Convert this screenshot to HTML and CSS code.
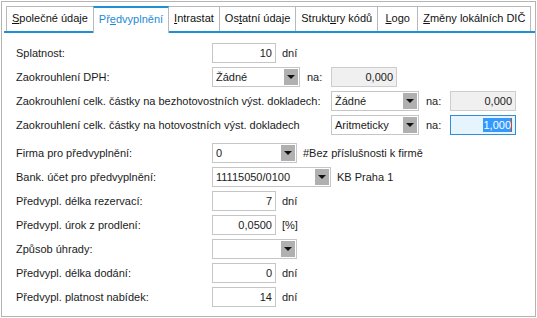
FILE: index.html
```html
<!DOCTYPE html>
<html lang="cs">
<head>
    <meta charset="UTF-8">
    <title>Předvyplnění</title>
    <link rel="stylesheet" href="styles.css">
</head>
<body>
    <div class="window">
        <div class="tabs">
            <div class="tab"><u>S</u>polečné údaje</div>
            <div class="tab active">Př<u>e</u>dvyplnění</div>
            <div class="tab"><u>I</u>ntrastat</div>
            <div class="tab">Os<u>t</u>atní údaje</div>
            <div class="tab">Strukt<u>u</u>ry kódů</div>
            <div class="tab"><u>L</u>ogo</div>
            <div class="tab"><u>Z</u>měny lokálních DIČ</div>
        </div>

        <div class="panel">
            <div class="group">
                <div class="row">
                    <span class="label">Splatnost:</span>
                    <span class="box num">10</span>
                    <span class="unit">dní</span>
                </div>
                <div class="row">
                    <span class="label">Zaokrouhlení DPH:</span>
                    <span class="combo w88"><span class="value">Žádné</span><span class="arrow"></span></span>
                    <span class="na">na:</span>
                    <span class="box small disabled">0,000</span>
                </div>
                <div class="row">
                    <span class="label wide">Zaokrouhlení celk. částky na bezhotovostních výst. dokladech:</span>
                    <span class="combo w88"><span class="value">Žádné</span><span class="arrow"></span></span>
                    <span class="na">na:</span>
                    <span class="box small disabled">0,000</span>
                </div>
                <div class="row">
                    <span class="label wide">Zaokrouhlení celk. částky na hotovostních výst. dokladech</span>
                    <span class="combo w88"><span class="value">Aritmeticky</span><span class="arrow"></span></span>
                    <span class="na">na:</span>
                    <span class="box small focused"><span class="selected">1,000</span><span class="caret"></span></span>
                </div>
            </div>

            <div class="group">
                <div class="row">
                    <span class="label">Firma pro předvyplnění:</span>
                    <span class="combo w85"><span class="value">0</span><span class="arrow"></span></span>
                    <span class="unit">#Bez příslušnosti k firmě</span>
                </div>
                <div class="row">
                    <span class="label">Bank. účet pro předvyplnění:</span>
                    <span class="combo w119"><span class="value">11115050/0100</span><span class="arrow"></span></span>
                    <span class="unit">KB Praha 1</span>
                </div>
                <div class="row">
                    <span class="label">Předvypl. délka rezervací:</span>
                    <span class="box num">7</span>
                    <span class="unit">dní</span>
                </div>
                <div class="row">
                    <span class="label">Předvypl. úrok z prodlení:</span>
                    <span class="box num">0,0500</span>
                    <span class="unit">[%]</span>
                </div>
                <div class="row">
                    <span class="label">Způsob úhrady:</span>
                    <span class="combo w85"><span class="value"></span><span class="arrow"></span></span>
                </div>
                <div class="row">
                    <span class="label">Předvypl. délka dodání:</span>
                    <span class="box num">0</span>
                    <span class="unit">dní</span>
                </div>
                <div class="row">
                    <span class="label">Předvypl. platnost nabídek:</span>
                    <span class="box num">14</span>
                    <span class="unit">dní</span>
                </div>
            </div>
        </div>
    </div>
</body>
</html>
```

FILE: styles.css
```css
* {
    margin: 0;
    padding: 0;
    box-sizing: border-box;
}

body {
    margin: 1px;
    background: #ffffff;
    font-family: 'Liberation Sans', Arial, sans-serif;
    font-size: 11px;
    color: #1b1b1b;
}

.window {
    height: 316px;
    border: 1px solid #b4b4b4;
    background: #ffffff;
    display: flex;
    flex-direction: column;
}

/* tabs */
.tabs {
    display: flex;
    margin: 4px 0 0 2px;
    padding-left: 2px;
    border-bottom: 2px solid #1e90d4;
}

.tab {
    height: 25px;
    line-height: 23px;
    min-width: 41px;
    padding: 0 5px;
    margin-right: -1px;
    border: 1px solid #b9b9b9;
    border-bottom: none;
    color: #111111;
    text-align: center;
    white-space: nowrap;
}

.tab.active {
    color: #1e8ad6;
    border-top: 2px solid #1e90d4;
    line-height: 22px;
    height: 27px;
    margin-bottom: -2px;
    background: #ffffff;
    position: relative;
    z-index: 1;
}

/* form */
.panel {
    padding: 8px 0 0 14px;
}

.group + .group {
    margin-top: 4px;
}

.row {
    height: 24px;
    display: flex;
    align-items: center;
}

.label {
    width: 196px;
    flex-shrink: 0;
    white-space: nowrap;
}

.label.wide {
    width: 315px;
}

.box {
    height: 20px;
    line-height: 18px;
    border: 1px solid #c6c6c6;
    padding: 0 3px;
    background: #ffffff;
    white-space: nowrap;
}

.box.num {
    width: 64px;
    text-align: right;
}

.box.small {
    width: 66px;
    text-align: right;
}

.box.disabled {
    background: #f0f0f0;
    border-color: #cdcdcd;
}

.box.focused {
    border-color: #2f8ed6;
    background: #e6f4fd;
    padding-right: 3px;
    display: flex;
    justify-content: flex-end;
    align-items: center;
}

.selected {
    background: #3399ff;
    color: #ffffff;
    line-height: 14px;
}

.caret {
    width: 1px;
    height: 14px;
    background: #c05020;
}

.unit {
    margin-left: 6px;
    white-space: nowrap;
}

.na {
    width: 24px;
    margin-left: 7px;
}

.combo {
    height: 20px;
    border: 1px solid #c6c6c6;
    background: #ffffff;
    display: flex;
    align-items: stretch;
}

.combo.w85 { width: 85px; }
.combo.w88 { width: 88px; }
.combo.w119 { width: 119px; }

.combo .value {
    flex: 1;
    line-height: 18px;
    padding-left: 3px;
    white-space: nowrap;
    overflow: hidden;
}

.combo .arrow {
    width: 14px;
    margin: 1px;
    background: #b0b0b0;
    display: flex;
    align-items: center;
    justify-content: center;
}

.combo .arrow::after {
    content: "";
    border-left: 4px solid transparent;
    border-right: 4px solid transparent;
    border-top: 4px solid #111111;
}
```
